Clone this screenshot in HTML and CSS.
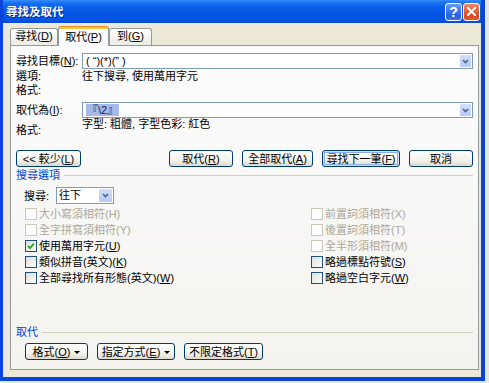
FILE: index.html
```html
<!DOCTYPE html>
<html>
<head>
    <title>尋找及取代</title>
    <link rel="stylesheet" href="styles.css">
</head>
<body>
<div class="window">
    <div class="titlebar">
        <span class="title">尋找及取代</span>
        <div class="caption-btns">
            <span class="cap-btn help">?</span>
            <span class="cap-btn close">
                <svg width="9" height="9" viewBox="0 0 9 9"><path d="M1 1L8 8M8 1L1 8" stroke="#fff" stroke-width="2" stroke-linecap="square"/></svg>
            </span>
        </div>
    </div>

    <div class="dialog">
        <div class="tabs">
            <span class="tab tab-find">尋找(<u>D</u>)</span>
            <span class="tab tab-replace active">取代(<u>P</u>)</span>
            <span class="tab tab-goto">到(<u>G</u>)</span>
        </div>

        <div class="panel">
            <div class="field-row">
                <span class="field-label">尋找目標(<u>N</u>):</span>
                <div class="combo">
                    <span class="combo-text">( “)(*)(” )</span>
                    <span class="drop"><svg width="7" height="5" viewBox="0 0 7 5"><path d="M1 1L3.5 3.5L6 1" fill="none" stroke="#4d6185" stroke-width="1.6"/></svg></span>
                </div>
            </div>
            <div class="info-row"><span class="field-label">選項:</span><span>往下搜尋, 使用萬用字元</span></div>
            <div class="info-row"><span class="field-label">格式:</span></div>

            <div class="field-row second">
                <span class="field-label">取代為(<u>I</u>):</span>
                <div class="combo">
                    <span class="combo-text"><span class="selected">『\2』</span></span>
                    <span class="drop"><svg width="7" height="5" viewBox="0 0 7 5"><path d="M1 1L3.5 3.5L6 1" fill="none" stroke="#4d6185" stroke-width="1.6"/></svg></span>
                </div>
            </div>
            <div class="format-row">
                <span class="field-label">格式:</span>
                <span class="format-value">字型: 粗體, 字型色彩: 紅色</span>
            </div>

            <div class="button-row">
                <button class="btn btn-less">&lt;&lt; 較少(<u>L</u>)</button>
                <div class="btn-group">
                    <button class="btn w64">取代(<u>R</u>)</button>
                    <button class="btn w71">全部取代(<u>A</u>)</button>
                    <button class="btn w78 default">尋找下一筆(<u>F</u>)</button>
                    <button class="btn w64">取消</button>
                </div>
            </div>

            <div class="group-title">搜尋選項</div>

            <div class="search-row">
                <span class="search-label">搜尋:</span>
                <div class="select">
                    <span class="select-text">往下</span>
                    <span class="drop"><svg width="7" height="5" viewBox="0 0 7 5"><path d="M1 1L3.5 3.5L6 1" fill="none" stroke="#4d6185" stroke-width="1.6"/></svg></span>
                </div>
            </div>

            <div class="options">
                <div class="check disabled"><span class="box"></span>大小寫須相符(H)</div>
                <div class="check disabled"><span class="box"></span>前置詞須相符(X)</div>
                <div class="check disabled"><span class="box"></span>全字拼寫須相符(Y)</div>
                <div class="check disabled"><span class="box"></span>後置詞須相符(T)</div>
                <div class="check"><span class="box"><svg width="8" height="8" viewBox="0 0 8 8"><path d="M1 4L3 6.2L7 1.5" fill="none" stroke="#21a121" stroke-width="1.8"/></svg></span>使用萬用字元(<u>U</u>)</div>
                <div class="check disabled"><span class="box"></span>全半形須相符(M)</div>
                <div class="check"><span class="box"></span>類似拼音(英文)(<u>K</u>)</div>
                <div class="check"><span class="box"></span>略過標點符號(<u>S</u>)</div>
                <div class="check"><span class="box"></span>全部尋找所有形態(英文)(<u>W</u>)</div>
                <div class="check"><span class="box"></span>略過空白字元(<u>W</u>)</div>
            </div>

            <div class="group-title replace-title">取代</div>

            <div class="bottom-buttons">
                <button class="btn w63">格式(<u>O</u>) <span class="caret"></span></button>
                <button class="btn w78">指定方式(<u>E</u>) <span class="caret"></span></button>
                <button class="btn w79">不限定格式(<u>T</u>)</button>
            </div>
        </div>
    </div>
</div>
</body>
</html>
```

FILE: styles.css
```css
body {
    margin: 0;
    background-color: #e6e6e6;
    font-family: "Liberation Sans", "Noto Sans CJK TC", sans-serif;
    font-size: 11px;
    color: #000;
}

.window {
    width: 485px;
    height: 381px;
    box-sizing: border-box;
    border-left: 3px solid #0b44d8;
    border-right: 4px solid #0b44d8;
    border-bottom: 4px solid #0b44d8;
    background-color: #ece9d8;
    display: flex;
    flex-direction: column;
}

.titlebar {
    height: 23px;
    flex: none;
    display: flex;
    align-items: center;
    padding: 0 1px 0 3px;
    background: linear-gradient(to bottom, #3a8cf8 0%, #1673f2 12%, #0a5fe8 30%, #0556e2 60%, #0554e3 85%, #0b4ad0 100%);
}

.title {
    color: #fff;
    font-weight: bold;
    font-size: 11.5px;
    line-height: 14px;
    text-shadow: 1px 1px 0 #0a2a8a;
}

.caption-btns {
    margin-left: auto;
    display: flex;
    gap: 1px;
}

.cap-btn {
    width: 17px;
    height: 18px;
    box-sizing: border-box;
    border: 1px solid #fff;
    border-radius: 3px;
    display: flex;
    align-items: center;
    justify-content: center;
    color: #fff;
    font-weight: bold;
    font-size: 14px;
}

.help {
    background: linear-gradient(to bottom, #6b9cf6, #2a63e0 70%, #3b70e6);
}

.close {
    background: linear-gradient(to bottom, #f08a62, #dc4a22 70%, #e05a30);
}

.dialog {
    flex: 1;
    padding: 3px 2px 0 7px;
}

.tabs {
    height: 19px;
    display: flex;
    align-items: flex-end;
    position: relative;
    z-index: 1;
}

.tab {
    height: 17px;
    box-sizing: border-box;
    border: 1px solid #919b9c;
    border-bottom: none;
    border-radius: 3px 3px 0 0;
    background: linear-gradient(to bottom, #fff, #ecebe6);
    text-align: center;
    line-height: 15px;
    white-space: nowrap;
}

.tab-find { width: 48px; }
.tab-replace { width: 51px; }
.tab-goto { width: 43px; }

.tab.active {
    height: 20px;
    margin-bottom: -1px;
    line-height: 18px;
    border-top: 1px solid #e68b2c;
    background: linear-gradient(to bottom, #ffc73c 0, #ffc73c 2px, #fcfcfe 2px);
    padding-top: 1px;
}

.panel {
    width: 469px;
    height: 325px;
    box-sizing: border-box;
    border: 1px solid #919b9c;
    background: linear-gradient(to bottom, #fcfcfe, #f4f3ee);
    padding: 7px 5px 0 5px;
}

.field-row {
    height: 16px;
    display: flex;
    align-items: center;
}

.field-row.second {
    margin-top: 5px;
}

.field-label {
    width: 66px;
    flex: none;
    line-height: 14px;
    white-space: nowrap;
}

.combo {
    flex: 1;
    height: 16px;
    box-sizing: border-box;
    border: 1px solid #7f9db9;
    background-color: #fff;
    display: flex;
    align-items: stretch;
}

.combo-text {
    padding-left: 3px;
    line-height: 14px;
    white-space: pre;
}

.selected {
    background-color: #a7b9e6;
    color: #11215e;
    padding: 0 1px;
}

.drop {
    margin: 1px 1px 1px auto;
    width: 11px;
    background: linear-gradient(to bottom, #d2defc, #b6c9f6);
    border-radius: 1px;
    display: flex;
    align-items: center;
    justify-content: center;
}

.info-row {
    height: 14px;
    line-height: 14px;
    display: flex;
}

.format-row {
    height: 18px;
    display: flex;
}

.format-row .field-label {
    align-self: flex-end;
    line-height: 12px;
}

.format-value {
    line-height: 12px;
}

.button-row {
    margin-top: 14px;
    height: 17px;
    display: flex;
}

.btn-group {
    margin-left: auto;
    display: flex;
    gap: 9px;
}

.btn {
    height: 17px;
    box-sizing: border-box;
    border: 1px solid #003c74;
    border-radius: 3px;
    background: linear-gradient(to bottom, #ffffff, #f4f3ee 60%, #dcd8cc);
    font-family: inherit;
    font-size: 11px;
    line-height: 14px;
    padding: 0;
    color: #000;
    white-space: nowrap;
}

.btn-less { width: 65px; }
.w63 { width: 63px; }
.w64 { width: 64px; }
.w71 { width: 71px; }
.w78 { width: 78px; }
.w79 { width: 79px; }

.btn.default {
    box-shadow: inset 0 0 0 1px #cee2fc, inset 0 0 0 2px #89ade4;
}

.caret {
    display: inline-block;
    width: 0;
    height: 0;
    border-left: 3px solid transparent;
    border-right: 3px solid transparent;
    border-top: 3px solid #000;
    vertical-align: middle;
    margin-left: 1px;
}

.group-title {
    margin-top: 1px;
    line-height: 14px;
    color: #0046d5;
    display: flex;
    align-items: center;
}

.group-title::after {
    content: "";
    flex: 1;
    height: 1px;
    margin-left: 4px;
    background-color: #d0d0bf;
}

.replace-title {
    margin-top: 39px;
}

.search-row {
    margin-top: 5px;
    height: 17px;
    padding-left: 8px;
    display: flex;
    align-items: center;
}

.search-label {
    width: 32px;
    line-height: 14px;
}

.select {
    width: 58px;
    height: 17px;
    box-sizing: border-box;
    border: 1px solid #7f9db9;
    background-color: #fff;
    display: flex;
    align-items: stretch;
}

.select-text {
    padding-left: 2px;
    line-height: 15px;
}

.select .drop {
    width: 13px;
}

.options {
    margin-top: 2px;
    padding-left: 9px;
    display: grid;
    grid-template-columns: 286px 1fr;
    grid-auto-rows: 16px;
}

.check {
    display: flex;
    align-items: center;
    line-height: 14px;
    white-space: nowrap;
}

.box {
    width: 12px;
    height: 12px;
    flex: none;
    box-sizing: border-box;
    border: 1px solid #1c5180;
    background: linear-gradient(135deg, #dcdcd7, #fff);
    margin-right: 2px;
    display: flex;
    align-items: center;
    justify-content: center;
}

.check.disabled {
    color: #aca899;
}

.check.disabled .box {
    border-color: #cac8bb;
    background: #fff;
}

.bottom-buttons {
    margin-top: 4px;
    padding-left: 9px;
    display: flex;
    gap: 9px;
}
```
